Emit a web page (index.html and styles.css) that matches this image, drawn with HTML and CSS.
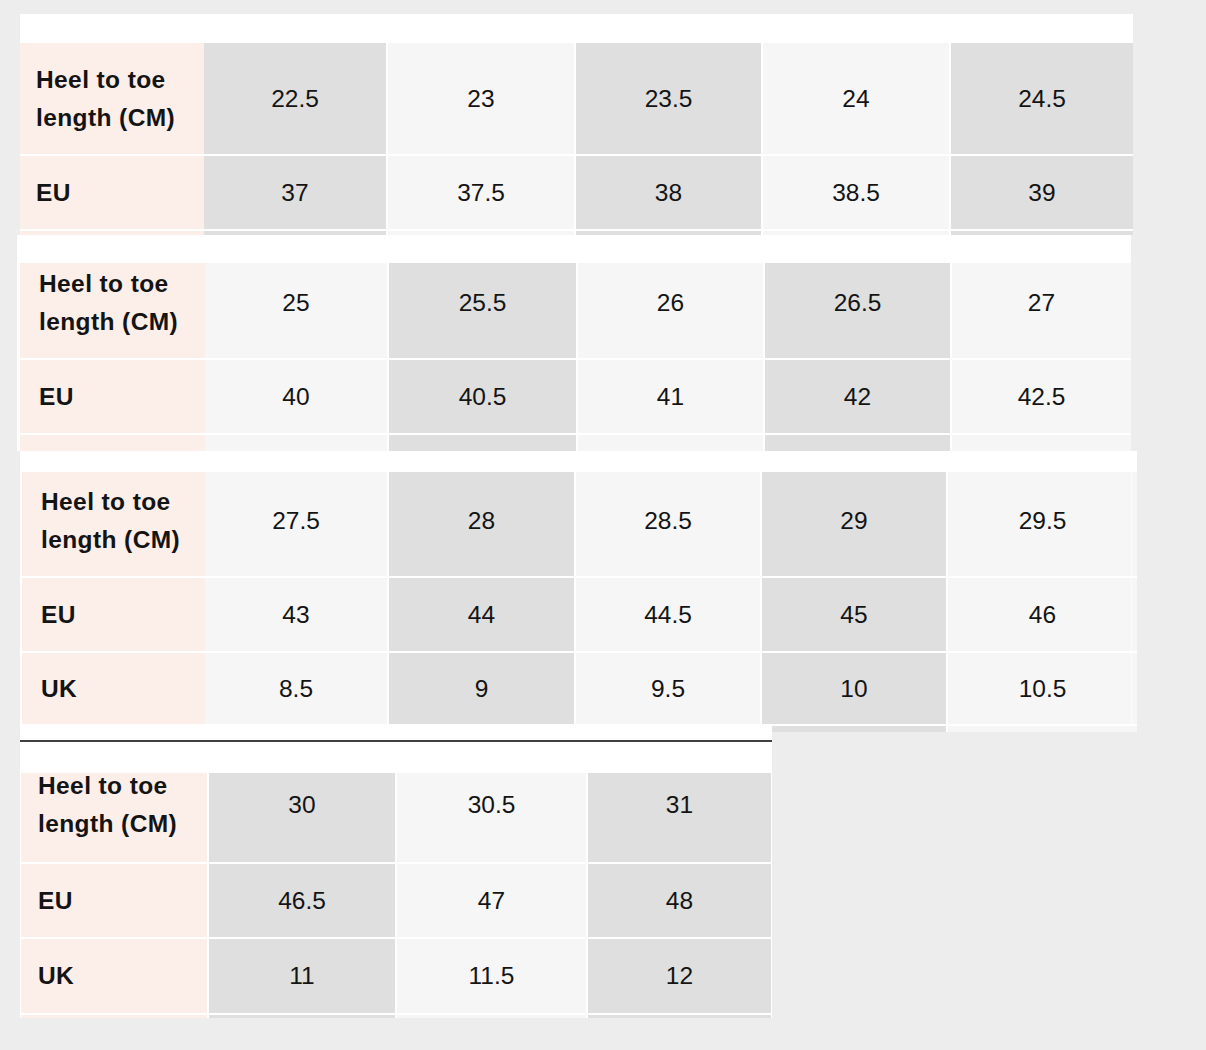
FILE: index.html
```html
<!DOCTYPE html>
<html lang="en">
<head>
<meta charset="utf-8">
<title>Size chart</title>
<link rel="stylesheet" href="styles.css">
</head>
<body>
<main class="collage">

  <section class="panel p1">
    <div class="grid g1">
      <div class="cell head r1">Heel to toe<br>length (CM)</div>
      <div class="cell dk r1">22.5</div>
      <div class="cell lt r1">23</div>
      <div class="cell dk r1">23.5</div>
      <div class="cell lt r1">24</div>
      <div class="cell dk r1">24.5</div>

      <div class="cell head">EU</div>
      <div class="cell dk">37</div>
      <div class="cell lt">37.5</div>
      <div class="cell dk">38</div>
      <div class="cell lt">38.5</div>
      <div class="cell dk">39</div>

      <div class="cell head"></div>
      <div class="cell dk"></div>
      <div class="cell lt"></div>
      <div class="cell dk"></div>
      <div class="cell lt"></div>
      <div class="cell dk"></div>
    </div>
  </section>

  <section class="panel p2">
    <div class="grid g2">
      <div class="cell head r1">Heel to toe<br>length (CM)</div>
      <div class="cell lt r1">25</div>
      <div class="cell dk r1">25.5</div>
      <div class="cell lt r1">26</div>
      <div class="cell dk r1">26.5</div>
      <div class="cell lt r1">27</div>

      <div class="cell head">EU</div>
      <div class="cell lt">40</div>
      <div class="cell dk">40.5</div>
      <div class="cell lt">41</div>
      <div class="cell dk">42</div>
      <div class="cell lt">42.5</div>

      <div class="cell head"></div>
      <div class="cell lt"></div>
      <div class="cell dk"></div>
      <div class="cell lt"></div>
      <div class="cell dk"></div>
      <div class="cell lt"></div>
    </div>
  </section>

  <section class="panel p3">
    <div class="grid g3">
      <div class="cell head r1">Heel to toe<br>length (CM)</div>
      <div class="cell lt r1">27.5</div>
      <div class="cell dk r1">28</div>
      <div class="cell lt r1">28.5</div>
      <div class="cell dk r1">29</div>
      <div class="cell lt r1 edge">29.5</div>

      <div class="cell head">EU</div>
      <div class="cell lt">43</div>
      <div class="cell dk">44</div>
      <div class="cell lt">44.5</div>
      <div class="cell dk">45</div>
      <div class="cell lt edge">46</div>

      <div class="cell head">UK</div>
      <div class="cell lt">8.5</div>
      <div class="cell dk">9</div>
      <div class="cell lt">9.5</div>
      <div class="cell dk">10</div>
      <div class="cell lt edge">10.5</div>

      <div class="cell head"></div>
      <div class="cell lt"></div>
      <div class="cell dk"></div>
      <div class="cell lt"></div>
      <div class="cell dk"></div>
      <div class="cell lt"></div>
    </div>
  </section>

  <section class="panel p4">
    <div class="rule"></div>
    <div class="grid g4">
      <div class="cell head r1">Heel to toe<br>length (CM)</div>
      <div class="cell dk r1">30</div>
      <div class="cell lt r1">30.5</div>
      <div class="cell dk r1">31</div>

      <div class="cell head">EU</div>
      <div class="cell dk">46.5</div>
      <div class="cell lt">47</div>
      <div class="cell dk">48</div>

      <div class="cell head">UK</div>
      <div class="cell dk">11</div>
      <div class="cell lt">11.5</div>
      <div class="cell dk">12</div>

      <div class="cell head"></div>
      <div class="cell dk"></div>
      <div class="cell lt"></div>
      <div class="cell dk"></div>
    </div>
  </section>

</main>
</body>
</html>
```

FILE: styles.css
```css
html, body {
  margin: 0;
  padding: 0;
}

body {
  background: #eeeded;
  font-family: "Liberation Sans", Arial, sans-serif;
  color: #141414;
  width: 1206px;
  height: 1050px;
  overflow: hidden;
}

.collage {
  padding-top: 14px;
}

.panel {
  background: #ffffff;
  box-sizing: border-box;
}

.grid {
  display: grid;
  column-gap: 2px;
  row-gap: 2px;
}

.cell {
  display: flex;
  align-items: center;
  justify-content: center;
  font-size: 24.5px;
  line-height: 38px;
  min-width: 0;
}

.cell.head {
  justify-content: flex-start;
  background: #fcefe9;
  font-weight: 700;
  letter-spacing: 0.4px;
  white-space: nowrap;
}

.dk { background: #dfdfdf; }
.lt { background: #f6f6f6; }

/* Panel 1 */
.p1 {
  margin-left: 20px;
  width: 1113px;
  padding-top: 29px;
}
.g1 {
  grid-template-columns: 182px 182px 186px 185px 186px 182px;
  grid-template-rows: 111px 73px 4px;
}
.g1 .head {
  margin-right: -2px;
  padding-left: 16px;
}

/* Panel 2 */
.p2 {
  margin-left: 17px;
  width: 1114px;
  padding-top: 28px;
  padding-left: 3px;
}
.g2 {
  grid-template-columns: 183px 182px 187px 185px 185px 179px;
  grid-template-rows: 95px 73px 16px;
}
.g2 .head {
  margin-right: -2px;
  padding-left: 19px;
}
.g2 .r1 { padding-bottom: 15px; }

/* Panel 3 */
.p3 {
  margin-left: 20px;
  width: 1117px;
  padding-top: 21px;
  padding-left: 2px;
}
.g3 {
  grid-template-columns: 181px 182px 185px 184px 184px 189px;
  grid-template-rows: 104px 73px 71px 6px;
}
.g3 .head {
  margin-right: -2px;
  padding-left: 19px;
}
.g3 .r1 { padding-bottom: 7px; }
.g3 .edge { box-shadow: inset -5px 0 0 #f6f6f6, inset -6px 0 0 #fbfbfb; }

/* Panel 4 */
.p4 {
  position: relative;
  margin-top: -7px;
  margin-left: 20px;
  width: 752px;
  padding-top: 15px;
}
.rule {
  height: 31px;
  border-top: 2px solid #3f3f3f;
}
.g4 {
  margin-left: 1px;
  grid-template-columns: 186px 186px 189px 183px;
  grid-template-rows: 89px 73px 74px 3px;
  column-gap: 2px;
}
.g4 .head {
  padding-left: 17px;
}
.g4 .r1 { padding-bottom: 26px; }
```
